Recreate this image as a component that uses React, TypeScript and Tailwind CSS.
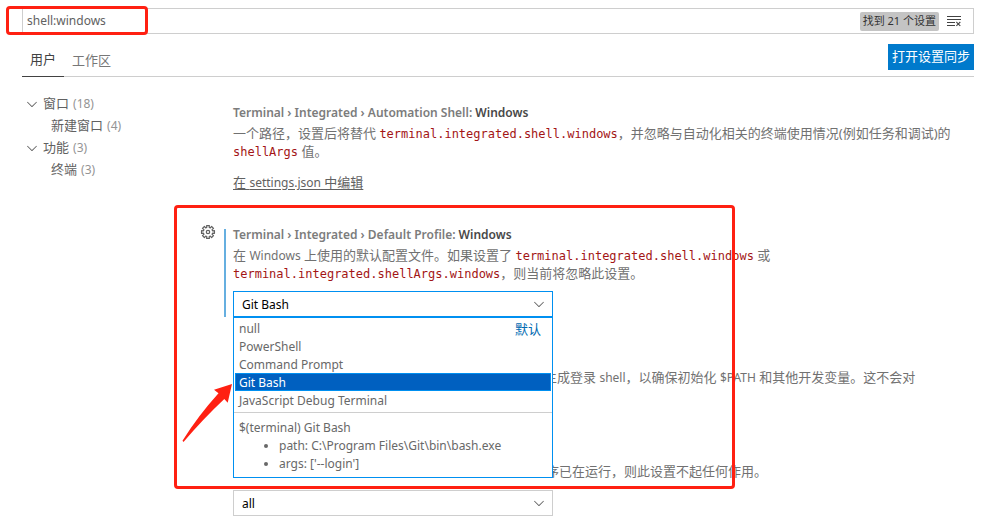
import type { ReactNode } from "react";
import { VscChevronDown, VscClearAll } from "react-icons/vsc";

function Latin({ children }: { children: ReactNode }) {
  return <span className="text-xs leading-none">{children}</span>;
}

function Code({ children }: { children: ReactNode }) {
  return (
    <code className="font-['DejaVu_Sans_Mono',monospace] text-xs leading-none text-[#a31515]">
      {children}
    </code>
  );
}

// Eight-toothed gear outline: each tooth contributes two inner and two outer points.
const gearPoints = Array.from({ length: 8 }, (_, i) =>
  [
    [-15, 4.7],
    [-12, 6.6],
    [12, 6.6],
    [15, 4.7],
  ].map(([offset, radius]) => {
    const a = ((i * 45 + offset) * Math.PI) / 180;
    return `${(8 + radius * Math.sin(a)).toFixed(2)},${(8 - radius * Math.cos(a)).toFixed(2)}`;
  }),
)
  .flat()
  .join(" ");

function GearIcon() {
  return (
    <svg className="size-4" viewBox="0 0 16 16" fill="none" stroke="currentColor" strokeWidth="1.2" strokeLinejoin="round">
      <polygon points={gearPoints} />
      <circle cx="8" cy="8" r="1.7" />
    </svg>
  );
}

function Tree() {
  const groups = [
    { name: "窗口", count: 18, children: [{ name: "新建窗口", count: 4 }] },
    { name: "功能", count: 3, children: [{ name: "终端", count: 3 }] },
  ];
  return (
    <nav aria-label="设置目录" className="w-[152px] shrink-0 pt-4">
      <ul>
        {groups.map((g) => (
          <li key={g.name}>
            <a href="#" className="flex h-[22px] items-center pl-0.5">
              <VscChevronDown className="mr-[3px] size-4" />
              {g.name}
              <span className="ml-1 text-xs text-[#949494]">({g.count})</span>
            </a>
            <ul>
              {g.children.map((c) => (
                <li key={c.name}>
                  <a href="#" className="flex h-[22px] items-center pl-[29px]">
                    {c.name}
                    <span className="ml-1 text-xs text-[#949494]">({c.count})</span>
                  </a>
                </li>
              ))}
            </ul>
          </li>
        ))}
      </ul>
    </nav>
  );
}

function Title({ path, name }: { path: string; name: string }) {
  return (
    <h3 className="mb-0.5 text-xs leading-[18px] font-semibold text-[#7c7c7c]">
      {path} <span className="text-[#484848]">{name}</span>
    </h3>
  );
}

function SelectBox({
  label,
  value,
  options,
  focused = false,
}: {
  label: string;
  value: string;
  options: string[];
  focused?: boolean;
}) {
  return (
    <div className="relative w-80">
      <select
        aria-label={label}
        defaultValue={value}
        className={
          "block h-[26px] w-full appearance-none border bg-white px-2 pt-px text-xs text-black outline-none " +
          (focused ? "border-[#0090f1]" : "border-[#cecece]")
        }
      >
        {options.map((o) => (
          <option key={o}>{o}</option>
        ))}
      </select>
      <VscChevronDown className="pointer-events-none absolute top-[5px] right-[6px] size-4 text-[#616161]" />
    </div>
  );
}

const profiles = ["null", "PowerShell", "Command Prompt", "Git Bash", "JavaScript Debug Terminal"];

function ProfileMenu() {
  return (
    <div className="absolute top-full left-0 z-10 w-80 border border-[#0090f1] bg-white text-xs leading-[18px] text-[#686868]">
      <ul role="listbox" aria-label="配置文件" className="px-px pt-px pb-[3px]">
        {profiles.map((p) => {
          const selected = p === "Git Bash";
          return (
            <li
              key={p}
              role="option"
              aria-selected={selected}
              className={
                "flex h-[18px] items-center justify-between pt-0.5 pr-[10px] pl-1 " +
                (selected ? "bg-[#0060c0] text-white outline -outline-offset-1 outline-[#0090f1]" : "")
              }
            >
              {p}
              {p === "null" && <span className="text-[13px] leading-4 text-[#006ab1]">默认</span>}
            </li>
          );
        })}
      </ul>
      <div className="border-t border-[#cecece] px-[5px] pt-1.5 pb-1">
        <p>$(terminal) Git Bash</p>
        <ul className="list-disc pl-10">
          <li>path: C:\Program Files\Git\bin\bash.exe</li>
          <li>args: ['--login']</li>
        </ul>
      </div>
    </div>
  );
}

function Highlight() {
  return (
    <div aria-hidden="true" className="pointer-events-none absolute -top-[21px] left-0 z-20 h-[284px] w-[561px] rounded border-3 border-[#ff2012]">
      <svg className="absolute top-[175px] left-[3px] h-[62px] w-[54px]" viewBox="0 0 54 62" fill="#ff2012">
        <path d="M52 1 L34 6.700 L38.500 10.300 Q18 33 2.500 57.700 L3.500 59 Q23 36 44.300 16 L47.700 19.800 Z" />
      </svg>
    </div>
  );
}

export default function App() {
  return (
    <main className="min-h-[532px] bg-white pt-2 pr-[34px] pl-[22px] font-['Noto_Sans','Noto_Sans_CJK_SC',sans-serif] text-[13px] text-[#616161]">
      <header className="relative">
        <div className="flex h-[26px] items-center border border-[#cecece] pr-[11px]">
          <input
            aria-label="搜索设置"
            defaultValue="shell:windows"
            className="min-w-0 flex-1 px-1 text-xs text-[#616161] outline-none"
          />
          <span className="mr-[7px] flex h-[19px] items-center rounded-xs bg-[#c4c4c4] px-[3px] text-[11px] text-[#333]">
            找到 21 个设置
          </span>
          <button aria-label="清除设置搜索输入" className="text-[#424242]">
            <VscClearAll className="size-4" />
          </button>
        </div>
        <div aria-hidden="true" className="pointer-events-none absolute -top-0.5 -left-4 h-[29px] w-[142px] rounded border-3 border-[#ff2012]" />
      </header>

      <div className="flex h-[43px] items-end justify-between border-b border-[#cecece]">
        <div role="tablist" className="-mb-px flex">
          <button role="tab" aria-selected="true" className="h-[34px] border-b border-[#424242] px-2 text-[#424242]">
            用户
          </button>
          <button role="tab" aria-selected="false" className="h-[34px] px-2 pt-px text-[#777]">
            工作区
          </button>
        </div>
        <button className="mb-[6px] h-[26px] bg-[#007acc] px-1 text-white">打开设置同步</button>
      </div>

      <div className="flex">
        <Tree />
        <div className="min-w-0 flex-1 pt-[27px] leading-[18px] text-[#717171]">
          <section className="pl-[59px]">
            <Title path="Terminal › Integrated › Automation Shell:" name="Windows" />
            <p>
              一个路径，设置后将替代 <Code>terminal.integrated.shell.windows</Code>
              ，并忽略与自动化相关的终端使用情况(例如任务和调试)的 <Code>shellArgs</Code> 值。
            </p>
            <a href="#" className="mt-[13px] inline-block text-[#616161] underline underline-offset-2">
              在 <Latin>settings.json</Latin> 中编辑
            </a>
          </section>

          <section className="relative mt-[35px] pl-[59px]">
            <Highlight />
            <button aria-label="更多操作" className="absolute -top-0.5 left-[26px] text-[#616161]">
              <GearIcon />
            </button>
            <div aria-hidden="true" className="absolute top-[3px] bottom-0 left-[50px] w-0.5 bg-[#66afe0]" />
            <Title path="Terminal › Integrated › Default Profile:" name="Windows" />
            <p className="pb-[9px]">
              在 <Latin>Windows</Latin> 上使用的默认配置文件。如果设置了{" "}
              <Code>terminal.integrated.shell.windows</Code> 或
              <br />
              <Code>terminal.integrated.shellArgs.windows</Code>，则当前将忽略此设置。
            </p>
            <div className="relative">
              <SelectBox label="默认配置文件" value="Git Bash" options={profiles} focused />
              <ProfileMenu />
            </div>
          </section>

          <section className="pt-[51px] pl-[59px]">
            <p className="pl-[311px]">
              生成登录 <Latin>shell</Latin>，以确保初始化 <Latin>$PATH</Latin> 和其他开发变量。这不会对
            </p>
          </section>

          <section className="pt-[76px] pb-4 pl-[59px]">
            <p className="mb-[10px] pl-[313px]">序已在运行，则此设置不起任何作用。</p>
            <SelectBox label="终端" value="all" options={["all"]} />
          </section>
        </div>
      </div>
    </main>
  );
}
